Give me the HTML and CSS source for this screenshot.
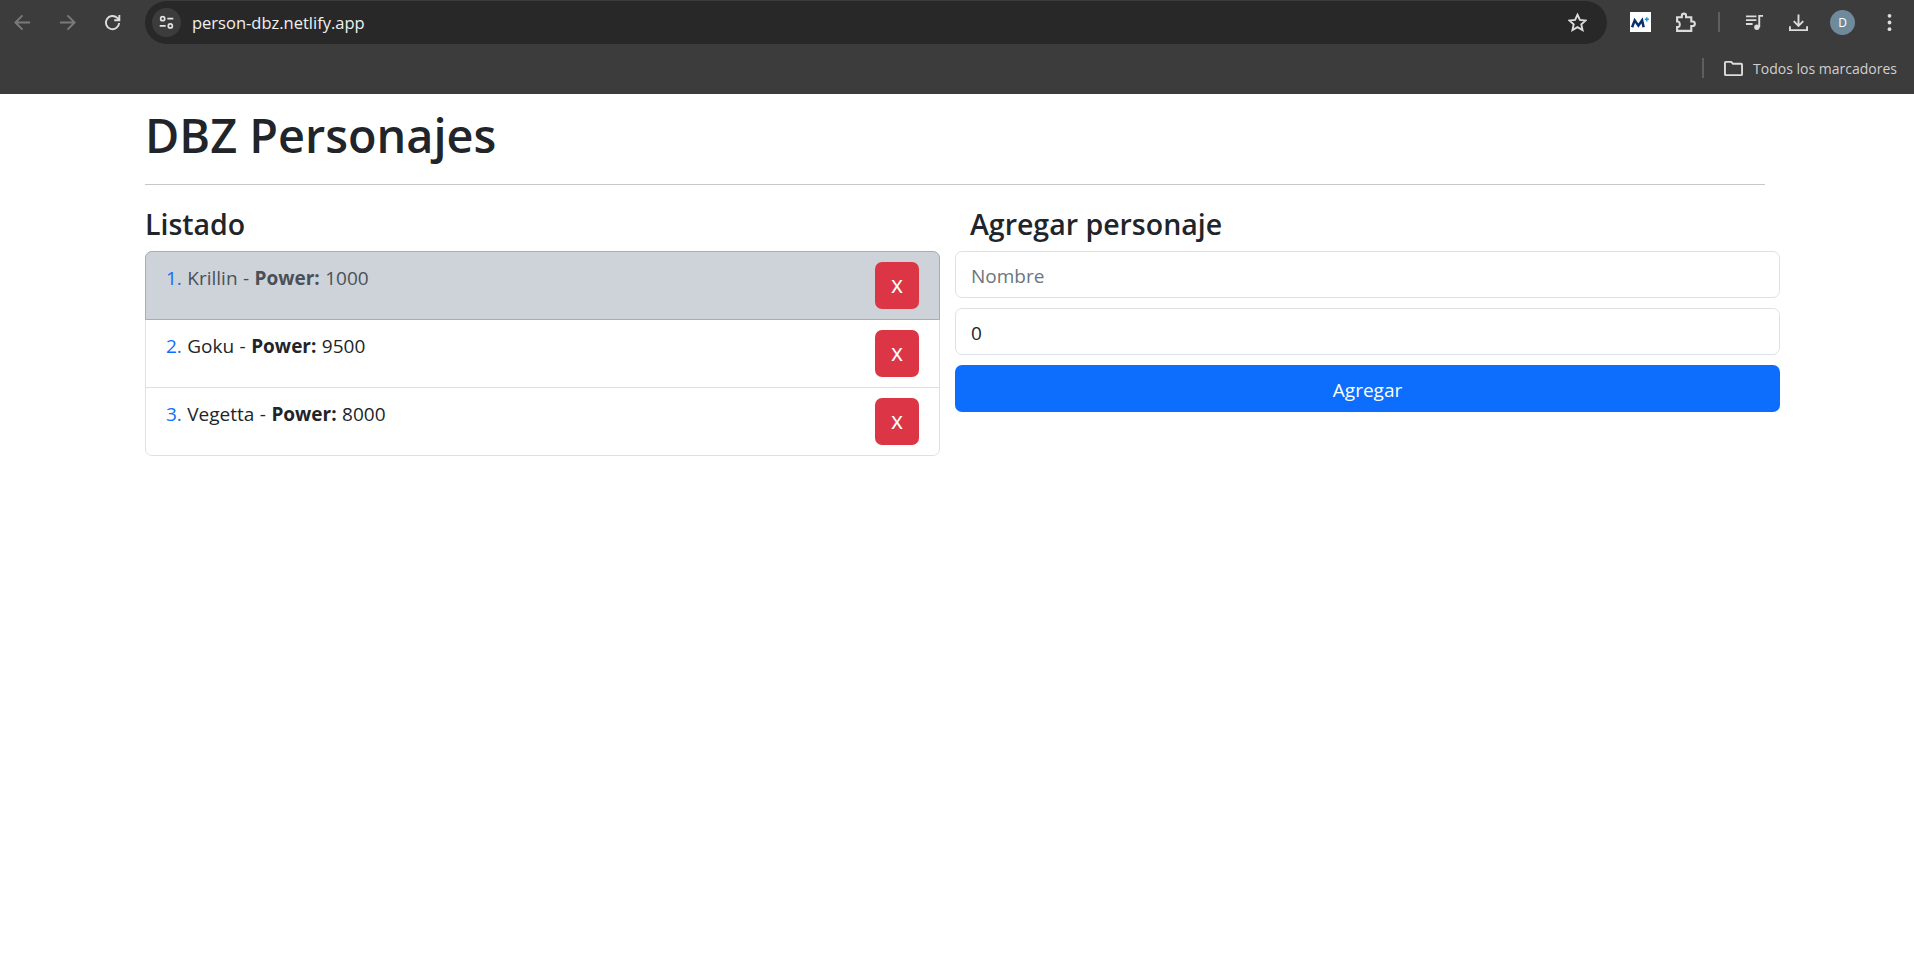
FILE: index.html
```html
<!DOCTYPE html>
<html lang="es">

<head>
    <meta charset="UTF-8">
    <meta name="viewport" content="width=device-width, initial-scale=1.0">
    <title>DBZ Personajes</title>
    <link rel="stylesheet" href="styles.css">
</head>

<body>
    <div class="browser">
        <div class="toolbar">
            <div class="nav-buttons">
                <svg class="icon dim" viewBox="0 0 20 20"><path d="M18 10H3M10 2.500 2.500 10l7.500 7.500"/></svg>
                <svg class="icon dim" viewBox="0 0 20 20"><path d="M2 10h15M10 2.500l7.500 7.500-7.500 7.500"/></svg>
                <svg class="icon" viewBox="0 0 20 20"><path d="M17 10.500A7 7 0 1 1 15 5.200L17 7.300M17.200 2.200v5.400h-5.400"/></svg>
            </div>
            <div class="omnibox">
                <div class="site-info">
                    <svg viewBox="0 0 20 20"><circle cx="5.500" cy="5.500" r="2.400"/><path d="M11 5.500h7M2 14h7"/><circle cx="14.500" cy="14" r="2.400"/></svg>
                </div>
                <span class="url">person-dbz.netlify.app</span>
                <svg class="icon star" viewBox="0 0 20 20"><path d="M10 1.800l2.500 5.500 6 .7-4.500 4 1.300 5.900-5.300-3-5.300 3 1.300-5.900-4.500-4 6-.7z"/></svg>
            </div>
            <div class="extensions">
                <div class="ext-movistar"><svg viewBox="0 0 20 20"><path class="m" d="M2 14.500 4.500 8 8 13 11.500 8 13 14.500"/><path class="plus" d="M14 7h4M16 5v4"/></svg></div>
                <svg class="icon puzzle" viewBox="0 0 20 20"><path d="M2 5h4.500V3.500a2 2 0 0 1 4 0V5h5v4h1.200a2.200 2.200 0 0 1 0 4.400h-1.200V18H2v-3.600c2.500 0 2.500-.9 2.500-2.600S4.500 9 2 9z"/></svg>
                <span class="divider"></span>
                <svg class="icon" viewBox="0 0 20 20"><path d="M1 3.500h11M1 7.500h11M1 11.500h7M15 15V3h4"/><circle class="fill" cx="12.500" cy="15" r="2.800"/></svg>
                <svg class="icon download" viewBox="0 0 20 20"><path d="M10 1.500v12M5 8.500l5 5 5-5M1 14v4h18v-4"/></svg>
                <div class="avatar">D</div>
                <svg class="icon more" viewBox="0 0 20 20"><circle class="fill" cx="10" cy="3" r="2"/><circle class="fill" cx="10" cy="10" r="2"/><circle class="fill" cx="10" cy="17" r="2"/></svg>
            </div>
        </div>
        <div class="bookmarks">
            <span class="divider tall"></span>
            <svg class="icon folder" viewBox="0 0 20 20"><path d="M1 4a1 1 0 0 1 1-1h5.500l2 2H18a1 1 0 0 1 1 1v10a1 1 0 0 1-1 1H2a1 1 0 0 1-1-1z"/></svg>
            <span>Todos los marcadores</span>
        </div>
    </div>

    <main class="page">
        <h1>DBZ Personajes</h1>
        <hr>
        <div class="columns">
            <section>
                <h3>Listado</h3>
                <ol class="hero-list">
                    <li class="hero-item selected">
                        <span><span class="num">1.</span> Krillin - <b>Power:</b> 1000</span>
                        <button class="btn-delete">x</button>
                    </li>
                    <li class="hero-item">
                        <span><span class="num">2.</span> Goku - <b>Power:</b> 9500</span>
                        <button class="btn-delete">x</button>
                    </li>
                    <li class="hero-item">
                        <span><span class="num">3.</span> Vegetta - <b>Power:</b> 8000</span>
                        <button class="btn-delete">x</button>
                    </li>
                </ol>
            </section>
            <section>
                <h3 class="form-title">Agregar personaje</h3>
                <form class="hero-form">
                    <input type="text" placeholder="Nombre">
                    <input type="number" value="0">
                    <button type="button" class="btn-add">Agregar</button>
                </form>
            </section>
        </div>
    </main>
</body>

</html>
```

FILE: styles.css
```css
* {
    box-sizing: border-box;
}

body {
    margin: 0;
    font-family: "Open Sans", "Noto Sans", sans-serif;
    color: #212529;
    background-color: #fff;
}

/* barra del navegador */
.browser {
    height: 94px;
    background-color: #3c3c3c;
    color: #e3e3e3;
}

.toolbar {
    display: flex;
    align-items: center;
    height: 44px;
}

.nav-buttons {
    display: flex;
    gap: 26px;
    width: 145px;
    padding-left: 13px;
}

.icon {
    width: 19px;
    height: 19px;
    fill: none;
    stroke: #dcdcdc;
    stroke-width: 2;
    flex-shrink: 0;
}

.icon.dim {
    stroke: #7a7a7a;
}

.icon .fill {
    fill: #dcdcdc;
    stroke: none;
}

.omnibox {
    display: flex;
    align-items: center;
    width: 1462px;
    height: 43px;
    background-color: #282828;
    border-radius: 22px;
    padding: 0 20px 0 7px;
}

.site-info {
    display: flex;
    align-items: center;
    justify-content: center;
    width: 29px;
    height: 29px;
    border-radius: 50%;
    background-color: #3c3c3c;
}

.site-info svg {
    width: 17px;
    height: 17px;
    fill: none;
    stroke: #e3e3e3;
    stroke-width: 2;
}

.url {
    flex: 1;
    margin-left: 11px;
    font-size: 16.500px;
    color: #f0f0f0;
}

.extensions {
    display: flex;
    align-items: center;
    gap: 26px;
    margin-left: 23px;
}

.ext-movistar {
    width: 21px;
    height: 20px;
    margin-right: -2px;
    background-color: #fff;
}

.ext-movistar svg {
    display: block;
    fill: none;
    stroke-width: 2.400;
}

.ext-movistar .m {
    stroke: #0b2f6b;
}

.ext-movistar .plus {
    stroke: #1b9ad6;
    stroke-width: 1.400;
}

.icon.puzzle {
    width: 21px;
    height: 21px;
}

.icon.download,
.icon.more {
    margin-left: -1px;
}

.divider {
    width: 2px;
    height: 20px;
    margin: 0 -1px 0 -4px;
    background-color: #5e5e5e;
}

.avatar {
    display: flex;
    align-items: center;
    justify-content: center;
    width: 25px;
    height: 25px;
    margin-left: -4px;
    border-radius: 50%;
    background-color: #6f8a9b;
    color: #fff;
    font-size: 12px;
}

.bookmarks {
    display: flex;
    align-items: center;
    justify-content: flex-end;
    gap: 10px;
    height: 48px;
    padding-right: 17px;
    font-size: 14px;
    color: #d0d0d0;
}

.divider.tall {
    margin: 0 10px 0 0;
    height: 20px;
    width: 2px;
}

/* contenido */
.page {
    padding: 0 134px 0 145px;
}

h1 {
    margin: 0;
    padding-top: 13px;
    font-size: 46.800px;
    font-weight: 600;
    line-height: 1.2;
}

hr {
    margin: 21px 15px 0 0;
    border: 0;
    border-top: 1px solid #c6c7c8;
}

.columns {
    display: grid;
    grid-template-columns: 795px 825px;
    column-gap: 15px;
    margin-top: 22px;
}

h3 {
    margin: 0 0 10px;
    font-size: 28.500px;
    font-weight: 600;
    line-height: 34px;
}

.form-title {
    padding-left: 15px;
}

.hero-list {
    margin: 0;
    padding: 0;
    list-style: none;
    border: 1px solid #dfe0e1;
    border-radius: 7px;
}

.hero-item {
    display: flex;
    align-items: flex-start;
    justify-content: space-between;
    height: 68px;
    padding: 10px 20px 0;
    font-size: 19px;
    word-spacing: 0.500px;
    border-bottom: 1px solid #dfe0e1;
}

.hero-item > span:first-child {
    margin-top: 3px;
}

.hero-item:last-child {
    border-bottom: 0;
    height: 67px;
}

.hero-item.selected {
    height: 69px;
    margin: -1px -1px 0;
    padding: 10px 20px 0;
    background-color: #ced2d9;
    color: #495057;
    border: 1px solid #a9adb3;
    border-radius: 7px 7px 0 0;
}

.num {
    color: #0d6efd;
}

.btn-delete {
    width: 44px;
    height: 47px;
    padding: 0 0 3px;
    border: 0;
    border-radius: 7px;
    background-color: #dc3545;
    color: #fff;
    font-family: inherit;
    font-size: 23px;
}

.hero-form {
    display: flex;
    flex-direction: column;
    gap: 10px;
}

.hero-form input {
    height: 47px;
    padding: 2px 15px 0;
    border: 1px solid #dee2e6;
    border-radius: 7px;
    font-family: inherit;
    font-size: 19px;
    color: #212529;
}

.hero-form input::placeholder {
    color: #6c757d;
}

.btn-add {
    height: 47px;
    padding: 2px 0 0;
    border: 0;
    border-radius: 7px;
    background-color: #0d6efd;
    color: #fff;
    font-family: inherit;
    font-size: 19px;
}
```
